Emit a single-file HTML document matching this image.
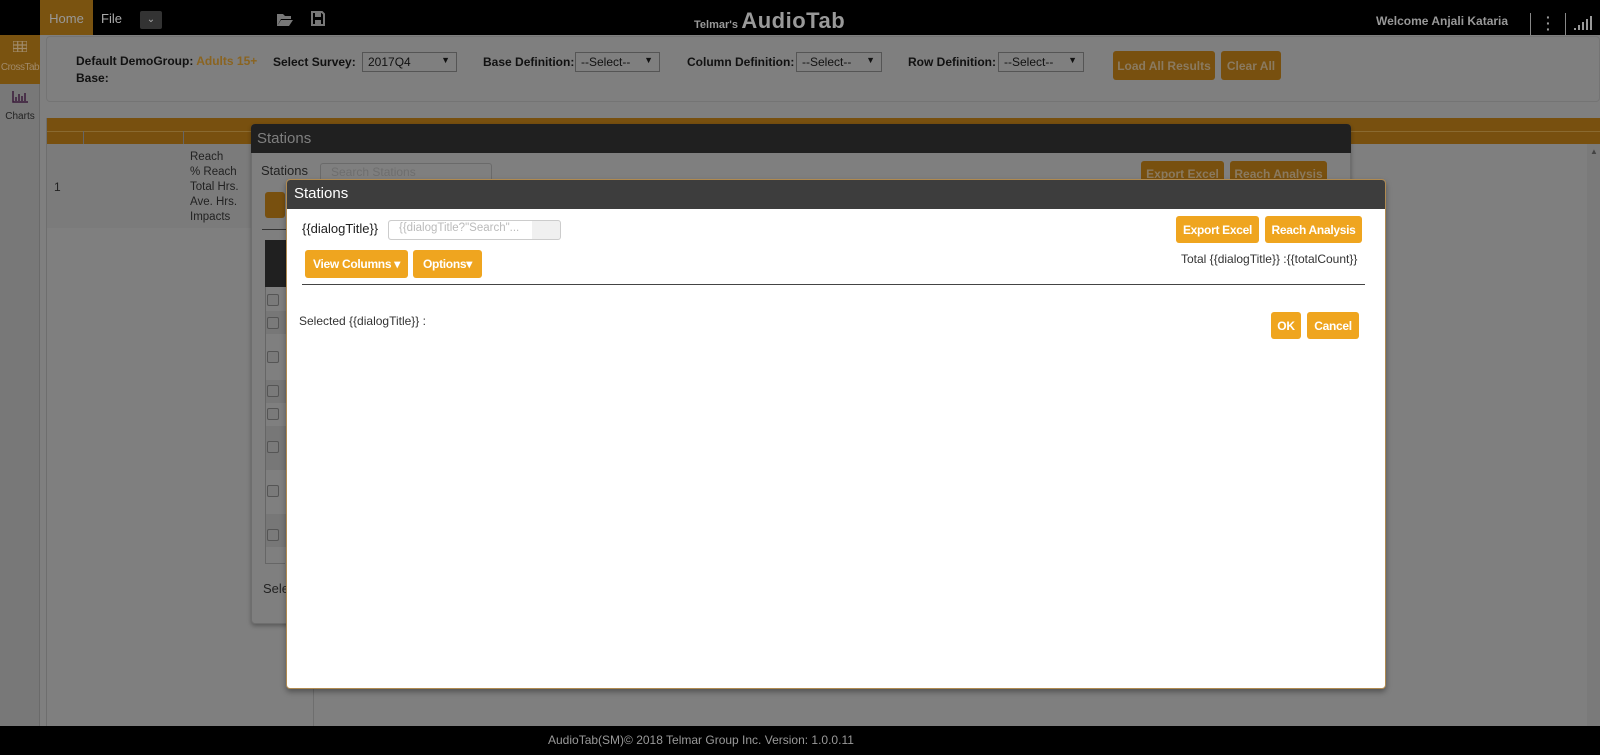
<!DOCTYPE html>
<html><head><meta charset="utf-8"><style>
*{box-sizing:border-box;margin:0;padding:0}
body{width:1600px;height:755px;overflow:hidden;background:#7f7f7f;font-family:"Liberation Sans",sans-serif;font-size:12px;position:relative;color:#111}
.a{position:absolute}
.btn{position:absolute;background:#efa51f;color:#fff;font-weight:bold;font-size:12px;border-radius:3px;display:flex;align-items:center;justify-content:center;letter-spacing:-0.3px}
.dbtn{position:absolute;background:#78500f;color:#8a7a60;font-weight:bold;font-size:12px;border-radius:3px;display:flex;align-items:center;justify-content:center}
.sel{position:absolute;border:1px solid #555;background:#7f7f7f;height:20px;font-size:12px;padding:2px 5px;color:#111}
.sel:after{content:"▼";position:absolute;right:6px;top:2px;font-size:9px}
.cb{position:absolute;left:267px;width:12px;height:12px;border:1px solid #555;border-radius:2px;background:#7a7a7a}
</style></head><body>
<!-- top bar -->
<div class="a" style="left:0;top:0;width:1600px;height:35px;background:#000"></div>
<div class="a" style="left:40px;top:0;width:53px;height:35px;background:#7a5310;color:#999;font-size:13px;line-height:38px;text-align:center">Home</div>
<div class="a" style="left:101px;top:11px;color:#aaa;font-size:13px">File</div>
<div class="a" style="left:140px;top:11px;width:22px;height:18px;background:#333;border-radius:2px;color:#aaa;font-size:10px;text-align:center;line-height:18px">&#8964;</div>
<svg class="a" style="left:276px;top:12px" width="18" height="14"><path d="M1 2h6l2 2h6v3H5l-4 7z M5 8h12l-4 6H1z" fill="#777"/></svg>
<svg class="a" style="left:311px;top:11px" width="14" height="15"><path d="M1 1h10l2 2v11H1z" fill="none" stroke="#777" stroke-width="2"/><rect x="4" y="2" width="6" height="4" fill="#777"/><rect x="4" y="9" width="6" height="4" fill="#777"/></svg>
<div class="a" style="left:694px;top:8px;color:#999;font-weight:bold"><span style="font-size:11px">Telmar's</span> <span style="font-size:22px;letter-spacing:0.5px">AudioTab</span></div>
<div class="a" style="left:1376px;top:14px;color:#999;font-weight:bold;font-size:12px">Welcome Anjali Kataria</div>
<div class="a" style="left:1530px;top:13px;width:1px;height:22px;background:#888"></div>
<div class="a" style="left:1565px;top:13px;width:1px;height:22px;background:#888"></div>
<div class="a" style="left:1546px;top:14px;color:#999;font-size:14px;line-height:6px;font-weight:bold">·<br>·<br>·</div>
<svg class="a" style="left:1574px;top:16px" width="20" height="14"><path d="M1 12v2M5 9v5M9 6v8M13 3v11M17 0v14" stroke="#999" stroke-width="2"/></svg>
<!-- sidebar -->
<div class="a" style="left:0;top:35px;width:40px;height:691px;background:#787878;border-right:1px solid #6a6a6a"></div>
<div class="a" style="left:0;top:35px;width:40px;height:49px;background:#7a5310"></div>
<svg class="a" style="left:13px;top:41px" width="14" height="11"><path d="M0 0h14v11H0z M0 4h14M0 7.5h14M4.7 0v11M9.3 0v11" fill="none" stroke="#a08a6a" stroke-width="1.2"/></svg>
<div class="a" style="left:0;top:62px;width:40px;text-align:center;color:#a08a6a;font-size:10px;letter-spacing:-0.5px">CrossTab</div>
<svg class="a" style="left:12px;top:91px" width="16" height="12"><path d="M1 0v11h15M4 6v4M7 3v7M10 5v5M13 2v8" stroke="#3a1a3a" stroke-width="1.5" fill="none"/></svg>
<div class="a" style="left:0;top:111px;width:40px;text-align:center;font-size:10px;color:#222">Charts</div>
<!-- config panel -->
<div class="a" style="left:46px;top:36px;width:1554px;height:66px;border:1px solid #747474;border-radius:4px"></div>
<div class="a" style="left:76px;top:53px;font-weight:bold;font-size:12px;line-height:17px;color:#111">Default DemoGroup: <span style="color:#8a6420">Adults 15+</span><br>Base:</div>
<div class="a" style="left:273px;top:55px;font-weight:bold">Select Survey:</div>
<div class="sel" style="left:362px;top:52px;width:95px">2017Q4</div>
<div class="a" style="left:483px;top:55px;font-weight:bold">Base Definition:</div>
<div class="sel" style="left:575px;top:52px;width:85px">--Select--</div>
<div class="a" style="left:687px;top:55px;font-weight:bold">Column Definition:</div>
<div class="sel" style="left:796px;top:52px;width:86px">--Select--</div>
<div class="a" style="left:908px;top:55px;font-weight:bold">Row Definition:</div>
<div class="sel" style="left:998px;top:52px;width:86px">--Select--</div>
<div class="dbtn" style="left:1113px;top:51px;width:102px;height:29px">Load All Results</div>
<div class="dbtn" style="left:1221px;top:51px;width:60px;height:29px">Clear All</div>
<!-- grid -->
<div class="a" style="left:46px;top:118px;width:1554px;height:608px;border-left:1px solid #6e6e6e"></div>
<div class="a" style="left:47px;top:118px;width:1553px;height:26px;background:#78500f"></div>
<div class="a" style="left:47px;top:131px;width:1553px;height:1px;background:#8a6a30"></div>
<div class="a" style="left:83px;top:131px;width:1px;height:97px;background:#666"></div>
<div class="a" style="left:183px;top:131px;width:1px;height:97px;background:#666"></div>
<div class="a" style="left:47px;top:144px;width:266px;height:84px;background:#7b7b7b"></div>
<div class="a" style="left:313px;top:132px;width:1px;height:594px;background:#6e6e6e"></div>
<div class="a" style="left:54px;top:180px;color:#222">1</div>
<div class="a" style="left:190px;top:150px;color:#222;line-height:15px;font-size:11.5px">Reach<br>% Reach<br>Total Hrs.<br>Ave. Hrs.<br>Impacts</div>
<div class="a" style="left:1587px;top:144px;width:13px;height:582px;background:#7a7a7a"></div>
<div class="a" style="left:1590px;top:147px;font-size:8px;color:#444">▲</div>
<!-- dialog 1 (dimmed) -->
<div class="a" style="left:251px;top:124px;width:1100px;height:500px;background:#7f7f7f;border:1px solid #6e6e6e;border-radius:4px;box-shadow:0 2px 4px rgba(0,0,0,.3)"></div>
<div class="a" style="left:251px;top:124px;width:1100px;height:29px;background:#202020;border-radius:4px 4px 0 0;color:#7f7f7f;font-size:15px;padding:6px 6px">Stations</div>
<div class="a" style="left:261px;top:163px;font-size:13px;color:#222">Stations</div>
<div class="a" style="left:320px;top:163px;width:172px;height:20px;border:1px solid #6a6a6a;border-radius:3px;color:#6e6e6e;font-size:12px;padding:1px 10px">Search Stations</div>
<div class="dbtn" style="left:1141px;top:161px;width:83px;height:26px">Export Excel</div>
<div class="dbtn" style="left:1230px;top:161px;width:97px;height:26px">Reach Analysis</div>
<div class="dbtn" style="left:265px;top:192px;width:20px;height:26px"></div>
<div class="a" style="left:262px;top:229px;width:30px;height:1px;background:#333"></div>
<div class="a" style="left:265px;top:240px;width:30px;height:47px;background:#202020"></div>
<div class="a" style="left:265px;top:287px;width:1px;height:276px;background:#666"></div>
<div class="a" style="left:265px;top:563px;width:20px;height:1px;background:#666"></div>
<div class="a" style="left:266px;top:311px;width:20px;height:23px;background:#777"></div>
<div class="a" style="left:266px;top:380px;width:20px;height:23px;background:#777"></div>
<div class="a" style="left:266px;top:426px;width:20px;height:44px;background:#777"></div>
<div class="a" style="left:266px;top:514px;width:20px;height:33px;background:#777"></div>
<div class="cb" style="top:294px"></div><div class="cb" style="top:317px"></div><div class="cb" style="top:351px"></div><div class="cb" style="top:385px"></div><div class="cb" style="top:408px"></div><div class="cb" style="top:441px"></div><div class="cb" style="top:485px"></div><div class="cb" style="top:529px"></div>
<div class="a" style="left:263px;top:581px;font-size:13px;color:#222">Sele</div>
<!-- dialog 2 -->
<div class="a" style="left:286px;top:179px;width:1100px;height:510px;background:#fff;border:1px solid #b08a50;border-radius:4px;box-shadow:0 3px 6px rgba(0,0,0,.35)"></div>
<div class="a" style="left:287px;top:180px;width:1098px;height:29px;background:#3d3d3d;border-radius:3px 3px 0 0;color:#fff;font-size:15px;padding:5px 7px">Stations</div>
<div class="a" style="left:302px;top:221px;font-size:13px;color:#222">{{dialogTitle}}</div>
<div class="a" style="left:388px;top:220px;width:173px;height:20px;border:1px solid #ccc;border-radius:3px;background:#f0f0f0"></div>
<div class="a" style="left:389px;top:221px;width:143px;height:18px;background:#fff;color:#bbb;font-size:11.5px;padding:1px 10px;border-radius:3px 0 0 3px">{{dialogTitle?"Search"...</div>
<div class="btn" style="left:305px;top:250px;width:103px;height:28px">View Columns ▾</div>
<div class="btn" style="left:413px;top:250px;width:69px;height:28px">Options▾</div>
<div class="btn" style="left:1176px;top:216px;width:83px;height:27px">Export Excel</div>
<div class="btn" style="left:1265px;top:216px;width:97px;height:27px">Reach Analysis</div>
<div class="a" style="left:1181px;top:252px;font-size:12px;color:#333">Total {{dialogTitle}} :{{totalCount}}</div>
<div class="a" style="left:302px;top:284px;width:1063px;height:1px;background:#444"></div>
<div class="a" style="left:299px;top:314px;font-size:12px;color:#333">Selected {{dialogTitle}} :</div>
<div class="btn" style="left:1271px;top:312px;width:30px;height:27px">OK</div>
<div class="btn" style="left:1307px;top:312px;width:52px;height:27px">Cancel</div>
<!-- footer -->
<div class="a" style="left:0;top:726px;width:1600px;height:29px;background:#000;color:#999;font-size:12px;padding-left:548px;line-height:29px">AudioTab(SM)© 2018 Telmar Group Inc. Version: 1.0.0.11</div>
</body></html>
